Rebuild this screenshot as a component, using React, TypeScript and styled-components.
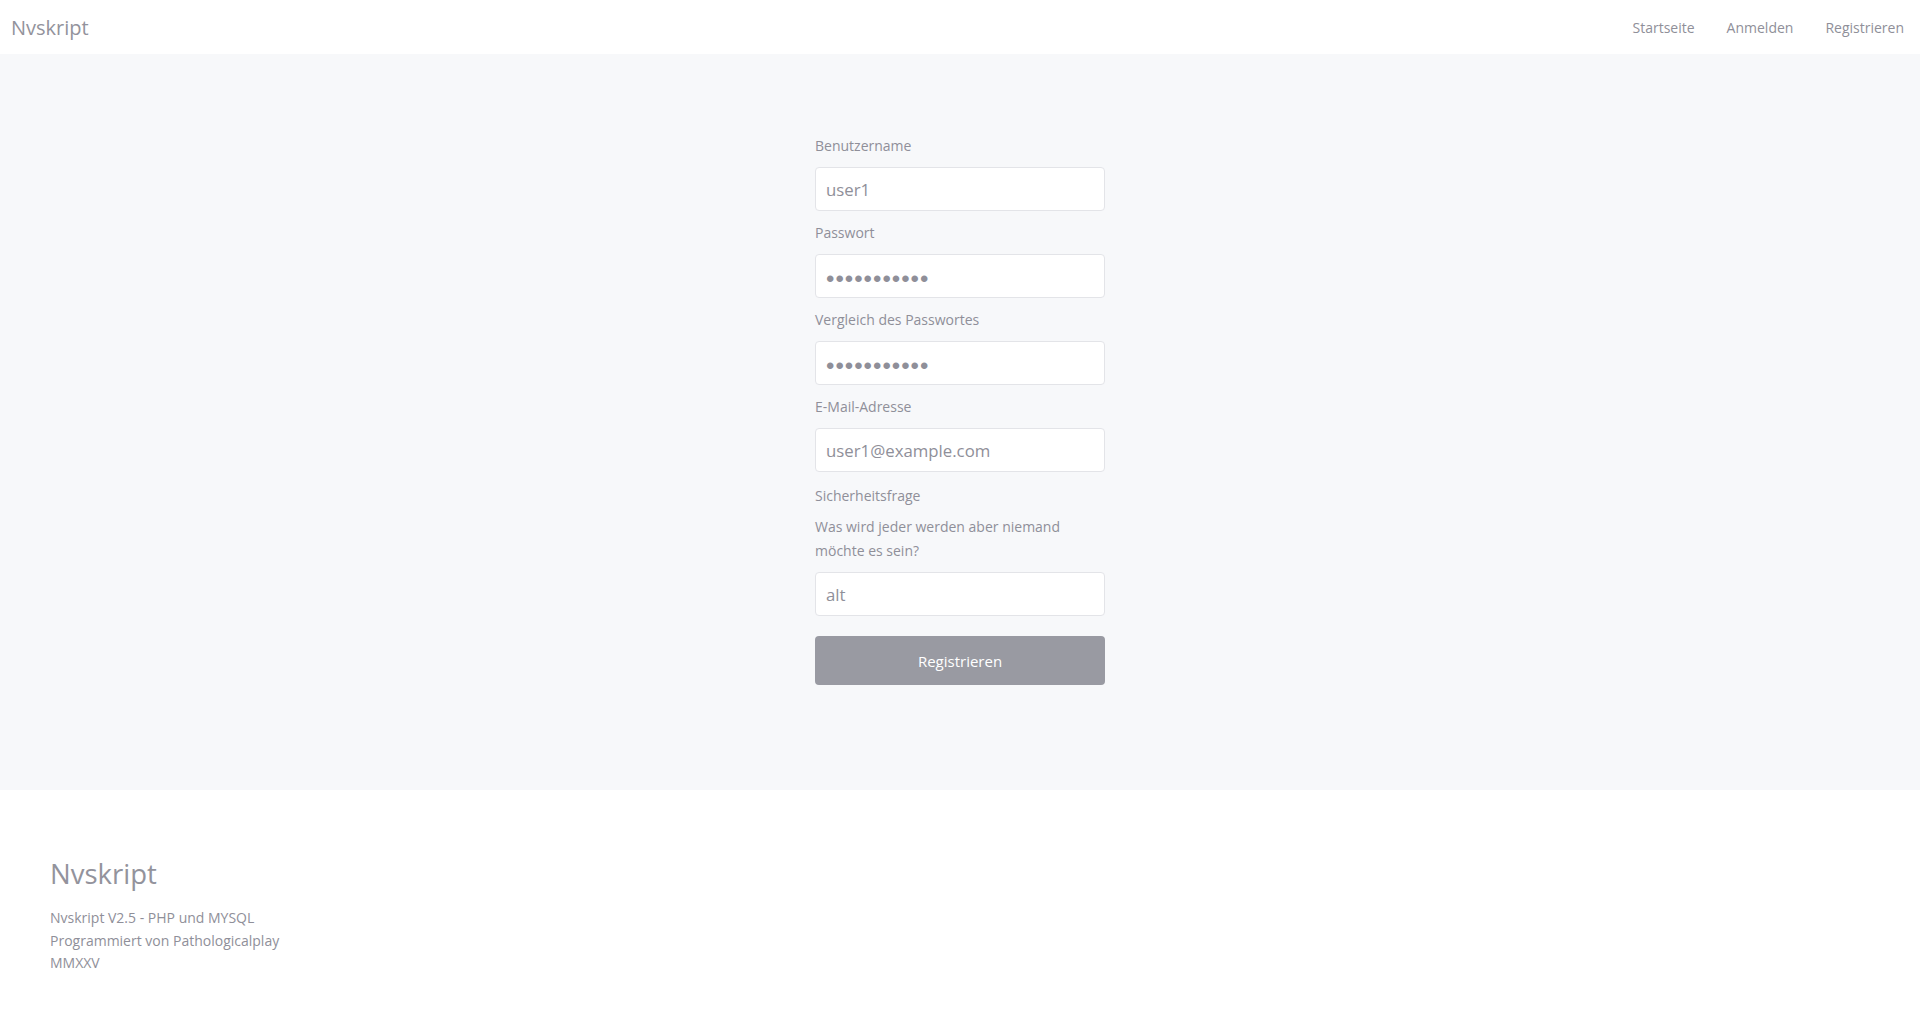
import * as React from "react";
import styled, { createGlobalStyle } from "styled-components";

const GlobalStyle = createGlobalStyle`
  html, body {
    margin: 0;
    padding: 0;
    background: #ffffff;
  }
  body {
    font-family: "Open Sans", "Noto Sans", sans-serif;
    color: #8f8f99;
  }
  * {
    box-sizing: border-box;
  }
`;

const Page = styled.div`
  display: flex;
  flex-direction: column;
  min-height: 1022px;
`;

const NavBar = styled.nav`
  display: flex;
  align-items: center;
  justify-content: space-between;
  height: 54px;
  padding: 0 0 0 11px;
  background: #ffffff;
`;

const Brand = styled.a`
  font-size: 20px;
  color: #93939c;
  text-decoration: none;
`;

const NavLinks = styled.div`
  display: flex;
  align-items: center;
`;

const NavLink = styled.a`
  font-size: 14px;
  color: #8f8f99;
  padding: 0 16px;
  text-decoration: none;
  cursor: pointer;
`;

const Main = styled.main`
  display: flex;
  justify-content: center;
  background: #f7f8fa;
  padding: 81px 0 105px;
`;

const Form = styled.form`
  display: flex;
  flex-direction: column;
  width: 290px;
`;

interface FieldProps {
  readonly spaced?: boolean;
}

const Field = styled.div<FieldProps>`
  display: flex;
  flex-direction: column;
  margin-top: ${({ spaced }) => (spaced ? "2px" : "0")};
  margin-bottom: 11px;
`;

const Label = styled.label`
  font-size: 14px;
  line-height: 22px;
  margin-bottom: 10px;
`;

const Question = styled.p`
  font-size: 14px;
  line-height: 24px;
  margin: -2px 0 9px;
`;

interface InputProps {
  readonly masked?: boolean;
}

const Input = styled.input<InputProps>`
  width: 100%;
  height: 44px;
  padding: ${({ masked }) => (masked ? "5px 10px 0" : "0 10px")};
  border: 1px solid #e3e4e8;
  border-radius: 4px;
  background: #ffffff;
  font-family: ${({ masked }) =>
    masked ? `"Liberation Sans", Arial, sans-serif` : `"Open Sans", "Noto Sans", sans-serif`};
  font-size: ${({ masked }) => (masked ? "24px" : "16.8px")};
  letter-spacing: ${({ masked }) => (masked ? "1px" : "normal")};
  color: #8f8f99;
  outline: none;
`;

const SubmitButton = styled.button`
  margin-top: 9px;
  height: 49px;
  border: none;
  border-radius: 4px;
  background: #999aa2;
  color: #ffffff;
  font-family: "Open Sans", "Noto Sans", sans-serif;
  font-size: 15px;
  cursor: pointer;
`;

const Footer = styled.footer`
  flex: 1;
  background: #ffffff;
  padding: 65px 50px 40px;
`;

const FooterTitle = styled.h2`
  font-size: 27.5px;
  font-weight: 400;
  margin: 0 0 15px;
  color: #93939c;
`;

const FooterLine = styled.p`
  font-size: 14px;
  line-height: 22.7px;
  margin: 0;
`;

const fields = [
  { label: "Benutzername", type: "text", value: "user1" },
  { label: "Passwort", type: "password", value: "12345678901" },
  { label: "Vergleich des Passwortes", type: "password", value: "12345678901" },
  { label: "E-Mail-Adresse", type: "email", value: "user1@example.com" },
];

export default function App(): JSX.Element {
  return (
    <Page>
      <GlobalStyle />
      <NavBar>
        <Brand>Nvskript</Brand>
        <NavLinks>
          <NavLink>Startseite</NavLink>
          <NavLink>Anmelden</NavLink>
          <NavLink>Registrieren</NavLink>
        </NavLinks>
      </NavBar>

      <Main>
        <Form onSubmit={(e) => e.preventDefault()}>
          {fields.map((f) => (
            <Field key={f.label}>
              <Label>{f.label}</Label>
              <Input type={f.type} masked={f.type === "password"} defaultValue={f.value} />
            </Field>
          ))}
          <Field spaced>
            <Label>Sicherheitsfrage</Label>
            <Question>
              Was wird jeder werden aber niemand
              <br />
              möchte es sein?
            </Question>
            <Input type="text" defaultValue="alt" />
          </Field>
          <SubmitButton type="submit">Registrieren</SubmitButton>
        </Form>
      </Main>

      <Footer>
        <FooterTitle>Nvskript</FooterTitle>
        <FooterLine>Nvskript V2.5 - PHP und MYSQL</FooterLine>
        <FooterLine>Programmiert von Pathologicalplay</FooterLine>
        <FooterLine>MMXXV</FooterLine>
      </Footer>
    </Page>
  );
}
